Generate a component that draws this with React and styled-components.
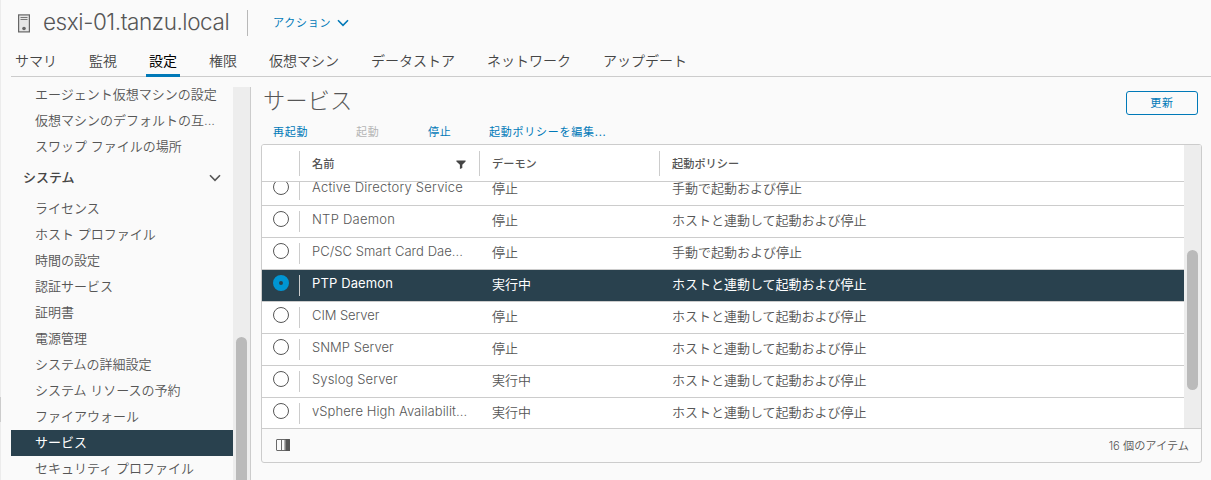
import React from "react";
import styled, { createGlobalStyle } from "styled-components";

const GlobalStyle = createGlobalStyle`
  *, *::before, *::after { box-sizing: border-box; }
  body {
    margin: 0;
    background: #fafafa;
    color: #565656;
    font-family: Inter, "Noto Sans CJK JP", sans-serif;
    font-size: 13px;
    font-weight: 300;
    overflow: hidden;
  }
  button { font: inherit; background: none; border: 0; padding: 0; margin: 0; }
`;

const Page = styled.div`
  display: flex;
  width: 1211px;
  height: 480px;
`;

const Edge = styled.div`
  width: 1px;
  flex: none;
  display: flex;
  flex-direction: column;
  padding-top: 397px;
  background: #ececec;
  margin-right: 10px;
`;

const EdgeHandle = styled.div`
  height: 25px;
  background: #cccccc;
`;

const View = styled.div`
  flex: 1;
  min-width: 0;
  display: flex;
  flex-direction: column;
`;

const Header = styled.header`
  display: flex;
  align-items: center;
  height: 46px;
  padding-left: 7px;
`;

const Title = styled.h1`
  margin: 0 18px 0 12px;
  width: 186px;
  font-size: 22.5px;
  line-height: 44px;
  height: 46px;
  font-weight: 300;
  letter-spacing: -0.43px;
  white-space: nowrap;
`;

const HeaderDivider = styled.span`
  width: 1px;
  height: 26px;
  background: #b8b8b8;
  margin-right: 25px;
`;

const LinkButton = styled.button`
  display: flex;
  align-items: center;
  gap: 6px;
  font-size: 11px;
  line-height: 16px;
  letter-spacing: 0.75px;
  font-weight: 400;
  white-space: nowrap;
  color: ${(p) => (p.$disabled ? "#b5b5b5" : "#0079b8")};
`;

const Tabs = styled.nav`
  display: flex;
  gap: 26px;
  height: 31px;
  padding-left: 1px;
  border-bottom: 1px solid #cccccc;
`;

const Tab = styled.button`
  height: 31px;
  padding: 0 3px 2px;
  font-size: 14px;
  line-height: 27px;
  font-weight: ${(p) => (p.$active ? 400 : 350)};
  white-space: nowrap;
  color: ${(p) => (p.$active ? "#000" : "#454545")};
  box-shadow: ${(p) => (p.$active ? "inset 0 -3px #0079b8" : "none")};
`;

const Body = styled.div`
  display: flex;
  flex: 1;
  min-height: 0;
`;

const Sidebar = styled.aside`
  display: flex;
  width: 240px;
  margin-top: 10px;
  border-right: 1px solid #cccccc;
  overflow: hidden;
`;

const SideList = styled.div`
  width: 222px;
  margin-top: -5px;
`;

const SideItem = styled.div`
  height: 26px;
  line-height: 24px;
  padding-left: 24px;
  white-space: nowrap;
  font-weight: ${(p) => (p.$active ? 400 : 350)};
  color: ${(p) => (p.$active ? "#fff" : "#565656")};
  background: ${(p) => (p.$active ? "#29414e" : "transparent")};
`;

const SideGroup = styled.div`
  display: flex;
  align-items: center;
  justify-content: space-between;
  height: 36px;
  padding: 0 12px;
  font-weight: 500;
  color: #454545;
`;

const SideGroupLabel = styled.span`
  padding-bottom: 3px;
`;

const Track = styled.div`
  width: 17px;
  flex: none;
  padding: ${(p) => p.$top}px 3px 0;
  background: #ededed;
`;

const Thumb = styled.div`
  height: ${(p) => p.$size}px;
  border-radius: 6px;
  background: #bababa;
`;

const Main = styled.main`
  flex: 1;
  min-width: 0;
  display: flex;
  flex-direction: column;
  padding: 10px 9px 0 10px;
`;

const MainHead = styled.div`
  display: flex;
  justify-content: space-between;
  align-items: flex-start;
  height: 36px;
  padding: 4px 4px 0 2px;
`;

const Heading = styled.h2`
  margin: 0;
  font-size: 22.3px;
  font-weight: 300;
  line-height: 20px;
  white-space: nowrap;
`;

const OutlineButton = styled.button`
  width: 72px;
  height: 24px;
  border: 1px solid #0079b8;
  border-radius: 3px;
  font-size: 11px;
  line-height: 21px;
  letter-spacing: 0.75px;
  font-weight: 400;
  color: #0079b8;
`;

const Actions = styled.div`
  display: flex;
  height: 21px;
  padding: 1px 0 0 12px;
`;

const ActionSlot = styled.div`
  width: ${(p) => p.$width}px;
`;

const Grid = styled.section`
  height: 319px;
  display: flex;
  flex-direction: column;
  border: 1px solid #cccccc;
  border-radius: 3px;
  overflow: hidden;
`;

const GridBody = styled.div`
  display: flex;
  height: 283px;
  background: #fff;
`;

const Table = styled.div`
  flex: 1;
  min-width: 0;
  display: flex;
  flex-direction: column;
`;

const columns = "37px 180px 180px 1fr";

const HeadRow = styled.div`
  display: grid;
  grid-template-columns: ${columns};
  align-items: start;
  height: 37px;
  flex: none;
  padding-top: 6px;
  border-bottom: 1px solid #cccccc;
`;

const HeadCell = styled.div`
  display: flex;
  align-items: center;
  justify-content: space-between;
  height: 25px;
  padding: 1px 13px 0 12px;
  border-left: 1px solid #cccccc;
  font-size: 11.2px;
  font-weight: 500;
  line-height: 16px;
`;

const Rows = styled.div`
  flex: 1;
  min-height: 0;
  overflow: hidden;
  & > :first-child { margin-top: -8px; }
`;

const Row = styled.div`
  display: grid;
  grid-template-columns: ${columns};
  height: 32px;
  padding-top: 5px;
  border-bottom: 1px solid #cccccc;
  font-weight: ${(p) => (p.$selected ? 400 : 350)};
  color: ${(p) => (p.$selected ? "#fff" : "#565656")};
  background: ${(p) => (p.$selected ? "#29414e" : "#fff")};
`;

const RadioCell = styled.div`
  padding-left: 11px;
`;

const Radio = styled.span`
  display: block;
  width: 16px;
  height: 16px;
  border-radius: 50%;
  border: ${(p) => (p.$checked ? "6px solid #0095d3" : "1px solid #565656")};
`;

const NameCell = styled.div`
  height: 21px;
  padding: 0 12px;
  border-left: 1px solid #cccccc;
  line-height: 17px;
  letter-spacing: ${(p) => p.$spacing}px;
  font-weight: ${(p) => (p.$selected ? 400 : 300)};
  white-space: nowrap;
`;

const Cell = styled.div`
  height: 21px;
  padding-left: 13px;
  line-height: 18px;
  white-space: nowrap;
`;

const GridFooter = styled.footer`
  display: flex;
  align-items: center;
  justify-content: space-between;
  height: 34px;
  padding: 0 12px 2px 14px;
  border-top: 1px solid #cccccc;
  font-size: 11.2px;
  font-weight: 350;
`;

const HostIcon = () => (
  <svg width="13" height="19" viewBox="0 0 13 19" fill="none">
    <rect x="0.6" y="0.9" width="10.8" height="17" fill="#e6e6e6" stroke="#666" strokeWidth="1.2" />
    <path d="M2.5 3.5h7M2.5 5.5h7" stroke="#777" />
    <circle cx="6" cy="14.5" r="1.8" fill="#666" />
  </svg>
);

const Chevron = ({ color }) => (
  <svg width="12" height="8" viewBox="0 0 12 8" fill="none">
    <path d="M1 1.2L6 6.3L11 1.2" stroke={color} strokeWidth="1.6" />
  </svg>
);

const FilterIcon = () => (
  <svg width="10" height="9" viewBox="0 0 10 9">
    <path d="M0.4 0.4h9.2v1L6.3 4.7V8L3.9 9V4.7L0.4 1.4z" fill="#454545" />
  </svg>
);

const ColumnsIcon = () => (
  <svg width="14" height="12" viewBox="0 0 14 12">
    <rect x="0.5" y="0.5" width="13" height="11" rx="0.5" fill="#fafafa" stroke="#6a6a6a" />
    <path d="M5.5 0v12M9 0v12" stroke="#6a6a6a" />
    <rect x="9.5" y="0" width="4.5" height="12" rx="0.5" fill="#565656" />
  </svg>
);

const tabs = ["サマリ", "監視", "設定", "権限", "仮想マシン", "データストア", "ネットワーク", "アップデート"];

const vmItems = ["エージェント仮想マシンの設定", "仮想マシンのデフォルトの互...", "スワップ ファイルの場所"];

const systemItems = [
  "ライセンス",
  "ホスト プロファイル",
  "時間の設定",
  "認証サービス",
  "証明書",
  "電源管理",
  "システムの詳細設定",
  "システム リソースの予約",
  "ファイアウォール",
  "サービス",
  "セキュリティ プロファイル",
];

const manual = "手動で起動および停止";
const withHost = "ホストと連動して起動および停止";

const services = [
  { name: "Active Directory Service", daemon: "停止", policy: manual, spacing: 0.23 },
  { name: "NTP Daemon", daemon: "停止", policy: withHost, spacing: 0.25 },
  { name: "PC/SC Smart Card Dae...", daemon: "停止", policy: manual, spacing: 0.03 },
  { name: "PTP Daemon", daemon: "実行中", policy: withHost, spacing: 0.12, selected: true },
  { name: "CIM Server", daemon: "停止", policy: withHost, spacing: -0.08 },
  { name: "SNMP Server", daemon: "停止", policy: withHost, spacing: 0.02 },
  { name: "Syslog Server", daemon: "実行中", policy: withHost, spacing: 0.12 },
  { name: "vSphere High Availabilit...", daemon: "実行中", policy: withHost, spacing: 0.08 },
];

export default function App() {
  return (
    <>
      <GlobalStyle />
      <Page>
        <Edge><EdgeHandle /></Edge>
        <View>
          <Header>
            <HostIcon />
            <Title>esxi-01.tanzu.local</Title>
            <HeaderDivider />
            <LinkButton>アクション<Chevron color="#0079b8" /></LinkButton>
          </Header>
          <Tabs>
            {tabs.map((t) => <Tab key={t} $active={t === "設定"}>{t}</Tab>)}
          </Tabs>
          <Body>
            <Sidebar>
              <SideList>
                {vmItems.map((t) => <SideItem key={t}>{t}</SideItem>)}
                <SideGroup>
                  <SideGroupLabel>システム</SideGroupLabel>
                  <Chevron color="#565656" />
                </SideGroup>
                {systemItems.map((t) => <SideItem key={t} $active={t === "サービス"}>{t}</SideItem>)}
              </SideList>
              <Track $top={250}><Thumb $size={160} /></Track>
            </Sidebar>
            <Main>
              <MainHead>
                <Heading>サービス</Heading>
                <OutlineButton>更新</OutlineButton>
              </MainHead>
              <Actions>
                <ActionSlot $width={83}><LinkButton>再起動</LinkButton></ActionSlot>
                <ActionSlot $width={72}><LinkButton $disabled>起動</LinkButton></ActionSlot>
                <ActionSlot $width={61}><LinkButton>停止</LinkButton></ActionSlot>
                <ActionSlot $width={130}><LinkButton>起動ポリシーを編集...</LinkButton></ActionSlot>
              </Actions>
              <Grid>
                <GridBody>
                  <Table>
                    <HeadRow>
                      <span />
                      <HeadCell>名前<FilterIcon /></HeadCell>
                      <HeadCell>デーモン</HeadCell>
                      <HeadCell>起動ポリシー</HeadCell>
                    </HeadRow>
                    <Rows>
                      {services.map((s) => (
                        <Row key={s.name} $selected={s.selected}>
                          <RadioCell><Radio $checked={s.selected} /></RadioCell>
                          <NameCell $spacing={s.spacing} $selected={s.selected}>{s.name}</NameCell>
                          <Cell>{s.daemon}</Cell>
                          <Cell>{s.policy}</Cell>
                        </Row>
                      ))}
                    </Rows>
                  </Table>
                  <Track $top={105}><Thumb $size={140} /></Track>
                </GridBody>
                <GridFooter>
                  <ColumnsIcon />
                  <span>16 個のアイテム</span>
                </GridFooter>
              </Grid>
            </Main>
          </Body>
        </View>
      </Page>
    </>
  );
}
